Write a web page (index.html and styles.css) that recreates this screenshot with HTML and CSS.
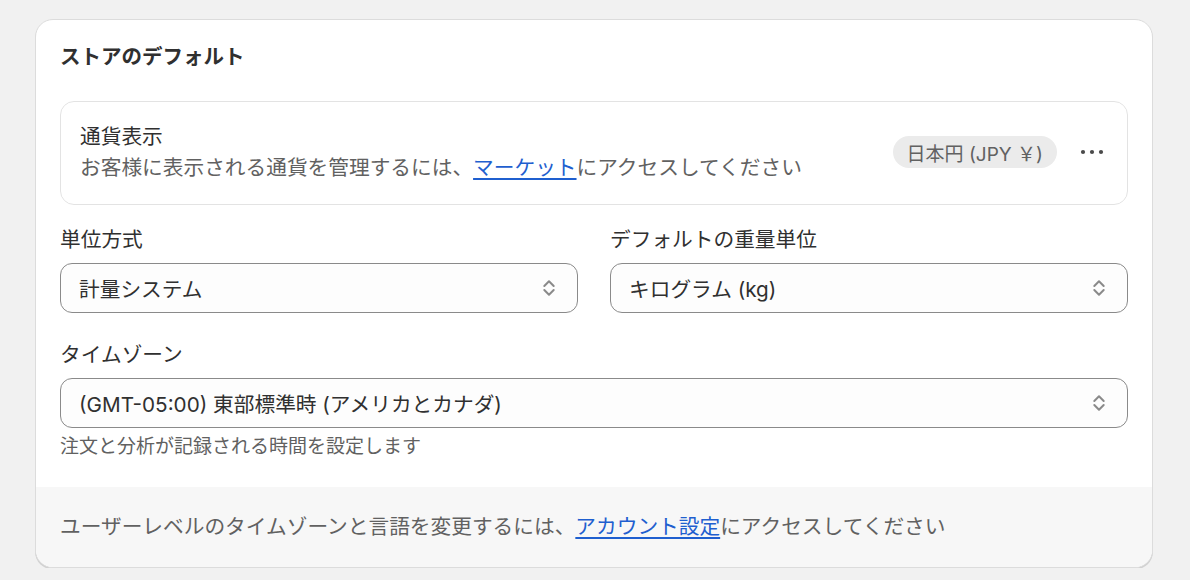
FILE: index.html
```html
<!DOCTYPE html>
<html lang="ja">
<head>
<meta charset="utf-8">
<title>ストアのデフォルト</title>
<link rel="stylesheet" href="styles.css">
</head>
<body>
<div class="card">
  <div class="card-body">
    <h2 class="card-title">ストアのデフォルト</h2>
    <div class="currency-box">
      <div class="currency-text">
        <div class="currency-title">通貨表示</div>
        <div class="currency-desc">お客様に表示される通貨を管理するには、<a href="#" class="link">マーケット</a>にアクセスしてください</div>
      </div>
      <div class="currency-actions">
        <span class="badge">日本円 (JPY ￥)</span>
        <button class="more-btn" aria-label="その他の操作">
          <svg width="28" height="8" viewBox="0 0 28 8"><circle cx="5" cy="4" r="2.1" fill="#4a4a4a"/><circle cx="14" cy="4" r="2.1" fill="#4a4a4a"/><circle cx="23" cy="4" r="2.1" fill="#4a4a4a"/></svg>
        </button>
      </div>
    </div>
    <div class="field-row">
      <div class="field">
        <div class="label">単位方式</div>
        <div class="select">
          <span class="select-value">計量システム</span>
          <svg class="chevron" width="20" height="22" viewBox="0 0 20 22"><path d="M5.3 9 10 4.3l4.7 4.7M5.3 13 10 17.7l4.7-4.7" fill="none" stroke="#8a8a8a" stroke-width="2" stroke-linecap="round" stroke-linejoin="round"/></svg>
        </div>
      </div>
      <div class="field">
        <div class="label">デフォルトの重量単位</div>
        <div class="select">
          <span class="select-value">キログラム (kg)</span>
          <svg class="chevron" width="20" height="22" viewBox="0 0 20 22"><path d="M5.3 9 10 4.3l4.7 4.7M5.3 13 10 17.7l4.7-4.7" fill="none" stroke="#8a8a8a" stroke-width="2" stroke-linecap="round" stroke-linejoin="round"/></svg>
        </div>
      </div>
    </div>
    <div class="field field-tz">
      <div class="label">タイムゾーン</div>
      <div class="select">
        <span class="select-value">(GMT-05:00) 東部標準時 (アメリカとカナダ)</span>
        <svg class="chevron" width="20" height="22" viewBox="0 0 20 22"><path d="M5.3 9 10 4.3l4.7 4.7M5.3 13 10 17.7l4.7-4.7" fill="none" stroke="#8a8a8a" stroke-width="2" stroke-linecap="round" stroke-linejoin="round"/></svg>
      </div>
      <div class="help">注文と分析が記録される時間を設定します</div>
    </div>
  </div>
  <div class="card-footer">ユーザーレベルのタイムゾーンと言語を変更するには、<a href="#" class="link">アカウント設定</a>にアクセスしてください</div>
</div>
</body>
</html>
```
FILE: styles.css
```css
* { box-sizing: border-box; }

body {
  margin: 0;
  padding: 19px 0 0 35px;
  background: #f1f1f1;
  font-family: "Inter", "Noto Sans CJK JP", sans-serif;
  color: #303030;
  font-size: 20.7px;
}

.card {
  width: 1118px;
  background: #ffffff;
  border: 1px solid #dcdcdc;
  border-radius: 18px;
  box-shadow: 0 1.5px 0 rgba(0, 0, 0, 0.13);
  overflow: hidden;
}

.card-body {
  padding: 23px 24px 26px;
}

.card-title {
  margin: 0;
  font-size: 20.5px;
  line-height: 28px;
  font-weight: 700;
  color: #303030;
}

.currency-box {
  margin-top: 30px;
  height: 104px;
  border: 1px solid #e3e3e3;
  border-radius: 14px;
  padding: 19px 19px 21px;
  display: flex;
  align-items: center;
  justify-content: space-between;
}

.currency-title {
  line-height: 31px;
  color: #303030;
}

.currency-desc {
  line-height: 31px;
  color: #616161;
}

.link {
  color: #1f5fcf;
  text-decoration: underline;
  text-underline-offset: 3px;
  text-decoration-thickness: 1.5px;
}

.currency-actions {
  display: flex;
  align-items: center;
  gap: 21px;
  margin-right: 2px;
}

.badge {
  display: inline-flex;
  align-items: center;
  height: 32px;
  padding: 0 14px;
  border-radius: 16px;
  background: #ebebeb;
  color: #616161;
  font-size: 19px;
}

.more-btn {
  border: 0;
  background: transparent;
  padding: 0;
  width: 28px;
  height: 28px;
  display: flex;
  align-items: center;
  justify-content: center;
}

.field-row {
  margin-top: 20px;
  display: flex;
  gap: 32px;
}

.field {
  flex: 1;
  min-width: 0;
}

.field-tz {
  margin-top: 27px;
}

.label {
  line-height: 30px;
  margin-bottom: 8px;
  color: #303030;
}

.select {
  height: 50px;
  border: 1px solid #8a8a8a;
  border-radius: 12px;
  background: #fdfdfd;
  display: flex;
  align-items: center;
  justify-content: space-between;
  padding: 0 19px 0 18px;
}

.select-value {
  color: #303030;
}

.chevron {
  flex: none;
  margin-right: -1px;
}

.help {
  margin-top: 5px;
  line-height: 28px;
  font-size: 19px;
  color: #616161;
}

.card-footer {
  height: 80px;
  background: #f7f7f7;
  padding: 24px 24px 0;
  line-height: 31px;
  color: #616161;
}
```
